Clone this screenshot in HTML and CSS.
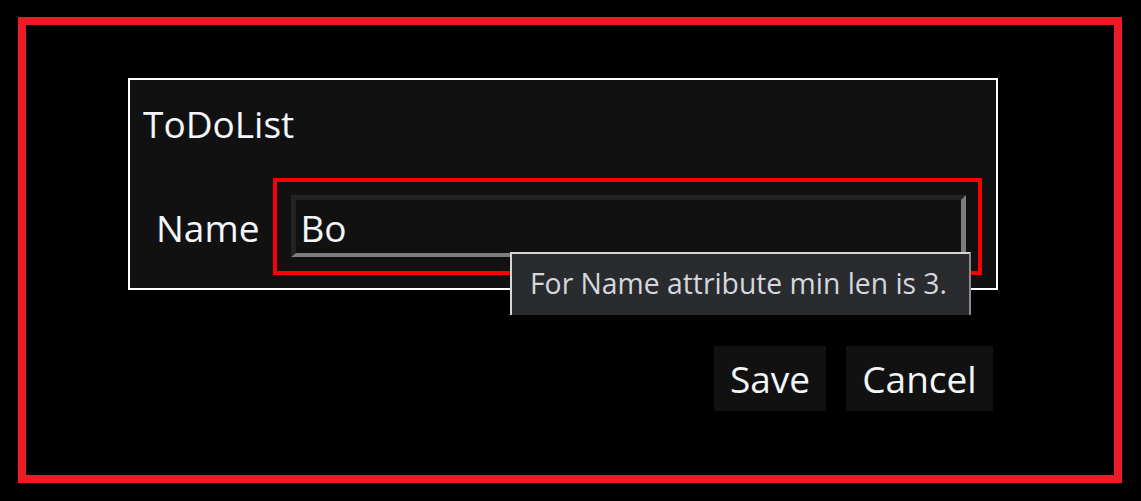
FILE: index.html
```html
<!DOCTYPE html>
<html lang="en">
<head>
<meta charset="utf-8">
<title>ToDoList</title>
<link rel="stylesheet" href="styles.css">
</head>
<body>
<div class="frame">
  <div class="panel">
    <div class="title">ToDoList</div>
    <div class="row">
      <label class="label" for="name">Name</label>
      <div class="invalid">
        <input id="name" class="field" type="text" value="Bo">
      </div>
    </div>
    <div class="tooltip">For Name attribute min len is 3.</div>
  </div>
  <div class="actions">
    <button class="btn btn-save">Save</button>
    <button class="btn btn-cancel">Cancel</button>
  </div>
</div>
</body>
</html>
```

FILE: styles.css
```css
html, body {
  margin: 0;
  padding: 0;
  background: #000;
}

body {
  font-family: "Open Sans", "Noto Sans", sans-serif;
  color: #f4f6fa;
}

.frame {
  box-sizing: border-box;
  width: 1104px;
  height: 466px;
  margin: 17px 0 0 18px;
  border: 8px solid #ed1c24;
}

.panel {
  position: relative;
  box-sizing: border-box;
  width: 870px;
  margin: 53px 0 0 102px;
  border: 2px solid #ffffff;
  background: #111111;
  padding: 20px 14px 13px 14px;
}

.title {
  font-size: 37px;
  line-height: 48px;
  height: 48px;
  margin-left: -1px;
}

.row {
  display: flex;
  align-items: center;
  margin-top: 30px;
}

.label {
  font-size: 37px;
  line-height: 48px;
  margin-left: 12px;
  margin-right: 14px;
  padding-top: 2px;
}

.invalid {
  flex: 1;
  box-sizing: border-box;
  height: 97px;
  border: 4px solid #ff0000;
  padding: 13px 12px 13px 14px;
}

.field {
  display: block;
  box-sizing: border-box;
  width: 100%;
  height: 62px;
  margin: 0;
  padding: 2px 0 0 4px;
  background: #111111;
  color: #f4f6fa;
  font-family: "Open Sans", "Noto Sans", sans-serif;
  font-size: 37px;
  line-height: 51px;
  border-style: solid;
  border-width: 5px 5px 4px 5px;
  border-color: #232323 #7c7c7c #7c7c7c #232323;
  outline: none;
}

.tooltip {
  position: absolute;
  left: 380px;
  top: 172px;
  box-sizing: border-box;
  width: 461px;
  height: 63px;
  padding-left: 18px;
  background: #2a2b2f;
  border-top: 2px solid #d6d6d6;
  border-left: 2px solid #d6d6d6;
  border-right: 2px solid #8a8a8a;
  color: #d4d8de;
  font-size: 28.3px;
  line-height: 58px;
  white-space: nowrap;
}

.actions {
  display: flex;
  justify-content: flex-end;
  gap: 20px;
  width: 865px;
  margin: 56px 0 0 102px;
}

.btn {
  box-sizing: border-box;
  height: 65px;
  margin: 0;
  padding: 0;
  border: none;
  background: #111111;
  color: #f4f6fa;
  font-family: "Open Sans", "Noto Sans", sans-serif;
  font-size: 37px;
  line-height: 65px;
  text-align: center;
}

.btn-save {
  width: 112px;
}

.btn-cancel {
  width: 147px;
}
```
